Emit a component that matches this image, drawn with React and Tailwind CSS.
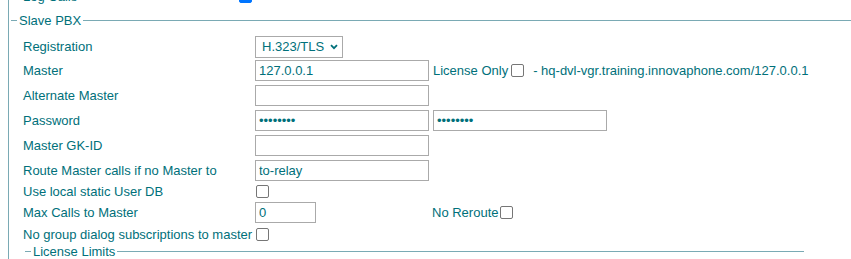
const TEXT = "text-[#00707a]";

const Box = ({ checked = false, className = "" }) => (
  <span
    className={
      "inline-block w-[13px] h-[13px] rounded-[2px] shrink-0 " +
      (checked ? "bg-[#0075ff] border border-[#0075ff] " : "bg-white border border-[#767676] ") +
      className
    }
  />
);

const Field = ({ value = "", type = "text", width = "w-[174px]" }) => (
  <input
    type={type}
    value={value}
    readOnly
    className={
      width +
      " h-[21px] border border-[#aaaaaa] bg-white px-[3px] text-[13px] text-[#00707a] outline-none font-['Liberation_Sans',Arial,sans-serif]"
    }
  />
);

const Row = ({ label, height, children }) => (
  <div className={"flex items-center " + height}>
    <div className="w-[232px] shrink-0 whitespace-nowrap">{label}</div>
    {children}
  </div>
);

const Legend = ({ title, lineClass = "" }) => (
  <div className="flex items-center h-[15px]">
    <span className="w-[6px] h-px bg-[#7aaab4] ml-[2px]" />
    <span className="px-[2px] leading-[15px]">{title}</span>
    <span className={"flex-1 h-px bg-[#7aaab4] " + lineClass} />
  </div>
);

export default function App() {
  return (
    <div
      className={
        "w-[851px] h-[259px] overflow-hidden bg-white text-[13px] " +
        TEXT +
        " font-['Liberation_Sans',Arial,sans-serif]"
      }
    >
      <div className="ml-[8px] border-l border-[#7aaab4] h-[272px] -mt-[13px]">
        <div className="flex items-center h-[19px] pl-[14px]">
          <div className="w-[216px]">Log Calls</div>
          <Box checked />
        </div>

        <div className="mt-[7px] mr-[-40px]">
          <Legend title="Slave PBX" />
        </div>

        <div className="pl-[14px]">
          <div className="flex items-center h-[22px] mt-[8px]">
            <div className="w-[232px] shrink-0">Registration</div>
            <div className="w-[88px] h-[22px] border border-[#aaaaaa] flex items-center pl-[6px] gap-[6px]">
              <span>H.323/TLS</span>
              <svg width="8" height="6" viewBox="0 0 8 6">
                <path d="M1 1.2 L4 4.2 L7 1.2" fill="none" stroke="#00707a" strokeWidth="1.8" />
              </svg>
            </div>
          </div>

          <Row label="Master" height="h-[25px]">
            <Field value="127.0.0.1" />
            <span className="ml-[4px]">License Only</span>
            <Box className="ml-[3px]" />
            <span className="ml-[9px]">- hq-dvl-vgr.training.innovaphone.com/127.0.0.1</span>
          </Row>

          <Row label="Alternate Master" height="h-[25px]">
            <Field />
          </Row>

          <Row label="Password" height="h-[25px]">
            <Field type="password" value="12345678" />
            <div className="ml-[4px]">
              <Field type="password" value="12345678" />
            </div>
          </Row>

          <Row label="Master GK-ID" height="h-[25px]">
            <Field />
          </Row>

          <Row label="Route Master calls if no Master to" height="h-[25px]">
            <Field value="to-relay" />
          </Row>

          <Row label="Use local static User DB" height="h-[17px]">
            <Box className="ml-px" />
          </Row>

          <Row label="Max Calls to Master" height="h-[25px]">
            <Field value="0" width="w-[61px]" />
            <span className="ml-[116px]">No Reroute</span>
            <Box className="ml-[2px]" />
          </Row>

          <Row label="No group dialog subscriptions to master" height="h-[19px]">
            <Box className="ml-px" />
          </Row>

          <div className="w-[781px]">
            <Legend title="License Limits" />
          </div>
        </div>
      </div>
    </div>
  );
}
